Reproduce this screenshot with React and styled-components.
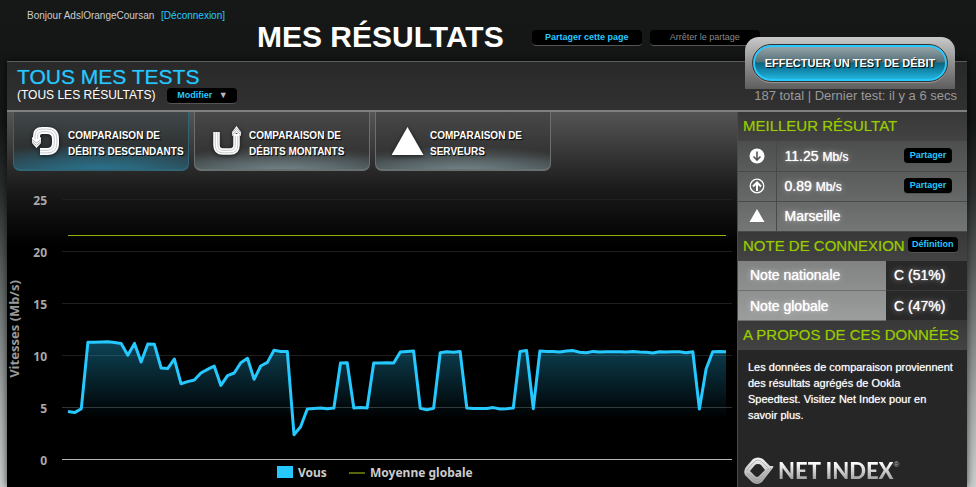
import React from 'react';
import styled, { createGlobalStyle, css } from 'styled-components';

const downloads = [
    4.58, 4.46, 4.84, 11.22, 11.22, 11.25, 11.28, 11.19, 11.12, 9.97,
    11.12, 9.33, 11.06, 11.03, 8.75, 8.69, 9.62, 7.24, 7.44, 7.6,
    8.27, 8.62, 8.94, 7.08, 8.01, 8.27, 9.26, 9.68, 7.66, 8.94,
    9.29, 10.45, 10.35, 10.35, 2.34, 3.11, 4.81, 4.87, 4.9, 4.84,
    4.9, 9.23, 9.26, 4.9, 4.94, 4.9, 9.23, 9.23, 9.26, 9.23,
    10.29, 10.35, 10.38, 4.87, 4.74, 4.87, 10.22, 10.32, 10.26, 10.35,
    4.9, 4.87, 4.87, 4.87, 4.94, 4.81, 4.84, 4.9, 10.35, 10.42,
    4.84, 10.38, 10.35, 10.35, 10.29, 10.38, 10.42, 10.26, 10.22, 10.35,
    10.29, 10.32, 10.32, 10.32, 10.29, 10.35, 10.29, 10.26, 10.19, 10.32,
    10.29, 10.32, 10.32, 10.22, 10.32, 4.81, 8.65, 10.32, 10.35, 10.32,
];

const ticks = [25, 20, 15, 10, 5, 0];
const average = 21.5;

// plot area inside the 730x316 chart
const x0 = 61;
const x1 = 719;
const yBase = 288;
const perUnit = 10.4;

const toX = (i) => x0 + (i * (x1 - x0)) / (downloads.length - 1);
const toY = (v) => yBase - v * perUnit;

function DownloadIcon(){
    return(
        <TabIcon viewBox="0 0 32 32" aria-hidden="true">
            <path d="M10 26.500H17Q25.500 26.500 25.500 18V14Q25.500 5.500 17 5.500H12Q6.500 5.500 6.500 11V15" fill="none" stroke="#fff" strokeWidth="7" />
            <path d="M2 12L6.500 15L11 12V18L6.500 23L2 18Z" fill="#fff" />
            <path d="M10 25.300H17Q24.300 25.300 24.300 18V14Q24.300 6.700 17 6.700H12Q7.700 6.700 7.700 11V14M10 27.900H17Q26.900 27.900 26.900 18V14Q26.900 4.100 17 4.100H12Q5.100 4.100 5.100 11V14" fill="none" stroke="#b2b5b7" strokeWidth=".7" />
            <path d="M2 14.500L6.500 18L11 14.500M2 16.800L6.500 20.300L11 16.800" fill="none" stroke="#9a9d9f" strokeWidth=".8" />
        </TabIcon>
    );
}

function UploadIcon(){
    return(
        <TabIcon viewBox="0 0 32 32" aria-hidden="true">
            <path d="M5.500 7V20Q5.500 26.500 12 26.500H19Q25.500 26.500 25.500 20V9" fill="none" stroke="#fff" strokeWidth="6.500" />
            <path d="M21 7L25.500 1L30 7V11L25.500 8L21 11Z" fill="#fff" />
            <path d="M4.300 7V20Q4.300 27.800 12 27.800H19Q26.800 27.800 26.800 20V11M6.800 7V20Q6.800 25.300 12 25.300H19Q24.300 25.300 24.300 20V11" fill="none" stroke="#b2b5b7" strokeWidth=".7" />
            <path d="M21 7.500L25.500 3.500L30 7.500M21 9.700L25.500 6L30 9.700" fill="none" stroke="#9a9d9f" strokeWidth=".8" />
        </TabIcon>
    );
}

function ServerIcon(){
    return(
        <TabIcon viewBox="0 0 32 32" aria-hidden="true">
            <path d="M15.500 2L31.500 30H-.5Z" fill="#fff" />
        </TabIcon>
    );
}

function NetIndexMark(){
    return(
        <svg width="30" height="28" viewBox="0 0 30 28" aria-hidden="true">
            <defs>
                <linearGradient id="metal" x1="0" y1="0" x2="0" y2="1">
                    <stop offset="0" stopColor="#f4f4f4" />
                    <stop offset="1" stopColor="#a2a2a2" />
                </linearGradient>
            </defs>
            <path fillRule="evenodd" fill="url(#metal)" d="M9 2Q14 -1 19 2L26 9L29 9Q30 10 28 12L18 25Q13 29 8 25L1 18Q-1 14 2 10ZM14 7Q12 7 11 8L6 14L11 19Q13 21 15 19L21 13L17 8Q16 7 14 7Z" />
            <path d="M3 14Q3 12 10 5Q14 1 18 5L24 11M2 16L10 24Q14 27 18 22L27 11M4 16L11 22Q14 24 17 20L25 11" fill="none" stroke="#858585" strokeWidth=".5" />
        </svg>
    );
}

function SpeedChart(){
    const points = downloads.map((v, i) => `${toX(i).toFixed(1)},${toY(v).toFixed(1)}`);
    const line = 'M' + points.join('L');
    return(
        <Chart viewBox="0 0 730 316" role="img" aria-label="Vitesses (Mb/s)">
            <defs>
                <linearGradient id="area" gradientUnits="userSpaceOnUse" x1="0" y1="168" x2="0" y2="248">
                    <stop offset="0" stopColor="#25c8ff" stopOpacity=".35" />
                    <stop offset="1" stopColor="#25c8ff" stopOpacity="0" />
                </linearGradient>
            </defs>
            {ticks.map((t) => (
                <g key={t}>
                    <rect x="55" y={Math.round(toY(t))} width="670" height="1" fill={t === 0 ? '#b4b4b4' : t === 5 ? '#333' : '#1f1f1f'} />
                    <text x="40" y={Math.round(toY(t)) + 6} textAnchor="end" fill="#aaa">{t}</text>
                </g>
            ))}
            <AxisTitle transform="translate(12 158) rotate(-90)" textAnchor="middle" fill="#999">Vitesses (Mb/s)</AxisTitle>
            <path d={`${line}L${x1},${yBase}L${x0},${yBase}Z`} fill="url(#area)" />
            <rect x={x0} y={Math.round(toY(average))} width={x1 - x0} height="1" fill="#93b00c" />
            <path d={line} fill="none" stroke="#25c8ff" strokeWidth="3" strokeLinejoin="round" />
            <rect x="270" y="295" width="16" height="12" fill="#25c8ff" />
            <text x="291" y="306" fill="#ccc">Vous</text>
            <rect x="342" y="301" width="16" height="2" fill="#56660a" />
            <text x="363" y="306" fill="#ccc">Moyenne globale</text>
        </Chart>
    );
}

export default function App(){
    return(
        <Page>
            <GlobalStyle />
            <TopBar>
                <User>Bonjour AdslOrangeCoursan <a href="#">[Déconnexion]</a></User>
                <Title>MES RÉSULTATS</Title>
                <Share>
                    <PillButton $width="110px">Partager cette page</PillButton>
                    <PillButton $width="110px" $muted>Arrêter le partage</PillButton>
                </Share>
            </TopBar>

            <Panel>
                <PanelHead>
                    <div>
                        <Heading>TOUS MES TESTS</Heading>
                        <Filter>
                            <span>(TOUS LES RÉSULTATS)</span>
                            <PillButton $width="70px">Modifier <Caret>▼</Caret></PillButton>
                        </Filter>
                    </div>
                    <Totals>187 total | Dernier test: il y a 6 secs</Totals>
                    <Launch>
                        <LaunchButton>EFFECTUER UN TEST DE DÉBIT</LaunchButton>
                    </Launch>
                </PanelHead>

                <Columns>
                    <Main>
                        <Tabs>
                            <Tab $active><DownloadIcon /><span>COMPARAISON DE<br />DÉBITS DESCENDANTS</span></Tab>
                            <Tab><UploadIcon /><span>COMPARAISON DE<br />DÉBITS MONTANTS</span></Tab>
                            <Tab><ServerIcon /><span>COMPARAISON DE<br />SERVEURS</span></Tab>
                        </Tabs>
                        <SpeedChart />
                    </Main>

                    <Side>
                        <SideTitle>MEILLEUR RÉSULTAT</SideTitle>
                        <BestTable>
                            <tbody>
                                <tr>
                                    <th>
                                        <svg width="16" height="16" viewBox="0 0 16 16" aria-hidden="true">
                                            <circle cx="8" cy="8" r="7.500" fill="#fff" />
                                            <path d="M8 3.500V12M4.500 8.500L8 12L11.500 8.500" fill="none" stroke="#555" strokeWidth="1.600" />
                                        </svg>
                                    </th>
                                    <td>11.25 <small>Mb/s</small></td>
                                    <td><PillButton $width="48px">Partager</PillButton></td>
                                </tr>
                                <tr>
                                    <th>
                                        <svg width="16" height="16" viewBox="0 0 16 16" aria-hidden="true">
                                            <circle cx="8" cy="8" r="6.800" fill="none" stroke="#fff" strokeWidth="1.300" />
                                            <path d="M8 13V5M4 8.500L8 4.500L12 8.500" fill="none" stroke="#fff" strokeWidth="2" />
                                        </svg>
                                    </th>
                                    <td>0.89 <small>Mb/s</small></td>
                                    <td><PillButton $width="48px">Partager</PillButton></td>
                                </tr>
                                <tr>
                                    <th>
                                        <svg width="16" height="16" viewBox="0 0 16 16" aria-hidden="true">
                                            <path d="M8 1L15.500 14H.5Z" fill="#fff" />
                                        </svg>
                                    </th>
                                    <td colSpan="2">Marseille</td>
                                </tr>
                            </tbody>
                        </BestTable>

                        <SideTitle>NOTE DE CONNEXION <PillButton $width="50px">Définition</PillButton></SideTitle>
                        <GradeTable>
                            <tbody>
                                <tr><th>Note nationale</th><td>C (51%)</td></tr>
                                <tr><th>Note globale</th><td>C (47%)</td></tr>
                            </tbody>
                        </GradeTable>

                        <SideTitle>A PROPOS DE CES DONNÉES</SideTitle>
                        <About>
                            <p>
                                Les données de comparaison proviennent<br />
                                des résultats agrégés de Ookla<br />
                                Speedtest. Visitez Net Index pour en<br />
                                savoir plus.
                            </p>
                            <Brand href="#">
                                <NetIndexMark />
                                <span>NET INDEX</span>
                                <sup>®</sup>
                            </Brand>
                        </About>
                    </Side>
                </Columns>
            </Panel>
        </Page>
    );
}

const GlobalStyle = createGlobalStyle`
    * {
        box-sizing: border-box;
    }
    body {
        margin: 0;
        color: #fff;
        font-family: "Liberation Sans", Arial, sans-serif;
    }
    a {
        color: #25c8ff;
        text-decoration: none;
    }
    button {
        font-family: inherit;
        cursor: pointer;
    }
`;

const Page = styled.div`
    display: flex;
    flex-direction: column;
    min-height: 100vh;
    background: linear-gradient(#151817 0, #131615 25%, #2c3030 40%, #6d7372 62%, #a6acab 82%, #ccd1d0 100%);
`;

const TopBar = styled.header`
    display: flex;
    align-items: flex-start;
    height: 61px;
    padding: 10px 27px 0;
`;

const User = styled.div`
    font-size: 10px;
    line-height: 12px;
    color: #ccc;

    a {
        margin-left: 4px;
    }
`;

const Title = styled.h1`
    margin: 10px 28px 0 32px;
    font-size: 30px;
    line-height: 34px;
`;

const Share = styled.div`
    display: flex;
    gap: 8px;
    margin-top: 20px;
`;

const PillButton = styled.button`
    width: ${(p) => p.$width};
    height: 16px;
    padding: 0;
    border: 0;
    border-bottom: 1px solid #555;
    border-radius: 4px;
    background: #000;
    color: ${(p) => (p.$muted ? '#888' : '#25c8ff')};
    font-size: 9px;
    font-weight: ${(p) => (p.$muted ? 400 : 700)};
    line-height: 15px;
    white-space: nowrap;
`;

const Caret = styled.span`
    margin-left: 4px;
    color: #bbb;
`;

const Panel = styled.main`
    flex: 1;
    display: flex;
    flex-direction: column;
    margin: 0 9px 0 7px;
    background: #000;
    box-shadow: 0 0 8px rgba(0, 0, 0, .7);
`;

const PanelHead = styled.div`
    position: relative;
    display: flex;
    justify-content: space-between;
    height: 51px;
    padding: 4px 10px 0;
    border-top: 1px solid #5c5c5c;
    border-bottom: 2px solid #808080;
    background: linear-gradient(#292929, #313131);
`;

const Heading = styled.h2`
    margin: 0;
    color: #25c8ff;
    font-size: 21px;
    font-weight: 400;
    line-height: 22px;
    text-shadow: 0 0 1px rgba(37, 200, 255, .6);
`;

const Filter = styled.div`
    display: flex;
    gap: 12px;
    font-size: 12px;
    line-height: 14px;
`;

const Totals = styled.div`
    align-self: flex-end;
    padding-bottom: 6px;
    color: #999;
    font-size: 13px;
    line-height: 16px;
`;

/* sits over the top edge of the panel */
const Launch = styled.div`
    position: absolute;
    top: -25px;
    right: 12px;
    width: 210px;
    height: 52px;
    padding: 8px;
    border-radius: 14px 14px 0 0;
    background: linear-gradient(#cacaca, #8f8f8f 50%, #5e5e5e);
`;

const LaunchButton = styled.button`
    width: 100%;
    height: 36px;
    padding: 0;
    border: 2px solid #25c8ff;
    border-radius: 18px;
    outline: 1px solid #333;
    background: linear-gradient(#94a3a8, #56717a 46%, #0c647e 50%, #128bb0 75%, #25b3da);
    color: #fff;
    font-size: 11px;
    font-weight: 700;
    text-shadow: 1px 1px 1px #000;
    box-shadow: 0 2px 1px rgba(255, 255, 255, .3);
`;

const Columns = styled.div`
    flex: 1;
    display: grid;
    grid-template-columns: minmax(0, 1fr) 230px;
`;

const Main = styled.section`
    background: linear-gradient(#555 0, #1a1a1a 78px, #000 134px);
`;

const Tabs = styled.div`
    display: flex;
    gap: 5px;
    padding: 0 6px;
`;

const Tab = styled.button`
    display: flex;
    align-items: center;
    width: 176px;
    height: 59px;
    padding: 0 0 0 16px;
    border: solid ${(p) => (p.$active ? '#2f6577' : '#6a6f70')};
    border-width: 0 1px 2px;
    border-radius: 0 0 7px 7px;
    background: ${(p) => (p.$active
        ? 'radial-gradient(80% 50% at 50% 105%, #2a7793 0, rgba(42, 119, 147, 0) 100%), linear-gradient(#42484a, #2e3233 60%, #2b4148)'
        : 'radial-gradient(80% 45% at 50% 105%, #74868b 0, rgba(116, 134, 139, 0) 100%), linear-gradient(#484848, #333 75%, #3e4749)')};
    color: #fff;
    font-size: 10px;
    font-weight: 700;
    line-height: 16px;
    text-align: left;
    white-space: nowrap;
    text-shadow: 1px 1px 1px #000;

    span {
        padding-top: 6px;
    }
`;

const TabIcon = styled.svg`
    flex: none;
    width: 32px;
    height: 32px;
    margin-right: 6px;
    filter: drop-shadow(0 1px 2px rgba(0, 0, 0, .6));
`;

const Chart = styled.svg`
    display: block;
    width: 100%;
    height: auto;
    overflow: visible;
    font-family: "Noto Sans", "Open Sans", sans-serif;
    font-size: 12px;
    font-weight: 700;
`;

const AxisTitle = styled.text`
    font-size: 13px;
`;

const Side = styled.aside`
    border-left: 1px solid #4a4a4a;
    background: #262626;
`;

const SideTitle = styled.h3`
    display: flex;
    align-items: center;
    gap: 3px;
    height: 29px;
    margin: 0;
    padding: 0 0 2px 5px;
    background: linear-gradient(#383838, #434343);
    color: #97cc00;
    font-size: 15px;
    font-weight: 400;
    text-shadow: 0 0 1px rgba(151, 204, 0, .5);
    white-space: nowrap;
`;

const glow = css`
    font-size: 14px;
    font-weight: 400;
    text-align: left;
    text-shadow: 0 0 1px #fff, 0 0 6px rgba(255, 255, 255, .6);
`;

const BestTable = styled.table`
    width: 100%;
    border-collapse: collapse;
    background: linear-gradient(#4d4e4e, #747575);

    th, td {
        ${glow}
        height: 30px;
        padding: 0;
        border-bottom: 1px solid #484949;
    }
    th {
        width: 38px;
        border-right: 1px solid #484949;
        text-align: center;
    }
    th svg {
        display: block;
        margin: auto;
    }
    td {
        padding-left: 8px;
    }
    td:nth-child(3) {
        padding-right: 15px;
        text-align: right;
    }
    small {
        font-size: 12px;
    }
    button {
        display: block;
        margin-left: auto;
    }
`;

const GradeTable = styled.table`
    width: 100%;
    border-collapse: collapse;
    background: linear-gradient(#818282, #9c9d9d);

    th, td {
        ${glow}
        height: 30px;
        padding: 0 0 0 12px;
        border-bottom: 1px solid #6e6f6f;
    }
    td {
        width: 81px;
        padding-left: 8px;
        border-color: #393939;
        background: #282828;
    }
`;

const About = styled.div`
    padding: 9px 8px 0 10px;

    p {
        margin: 0;
        font-size: 11px;
        line-height: 16px;
        text-shadow: 0 0 1px rgba(255, 255, 255, .7);
    }
`;

const Brand = styled.a`
    display: flex;
    align-items: center;
    gap: 4px;
    margin: 34px 0 0 -4px;

    span {
        background: linear-gradient(#fff 20%, #999 85%);
        background-clip: text;
        color: transparent;
        font-family: Lato, sans-serif;
        font-size: 22px;
        font-weight: 900;
        line-height: 28px;
    }
    sup {
        align-self: flex-start;
        margin-left: -4px;
        color: #bbb;
        font-size: 8px;
        line-height: 16px;
    }
`;
